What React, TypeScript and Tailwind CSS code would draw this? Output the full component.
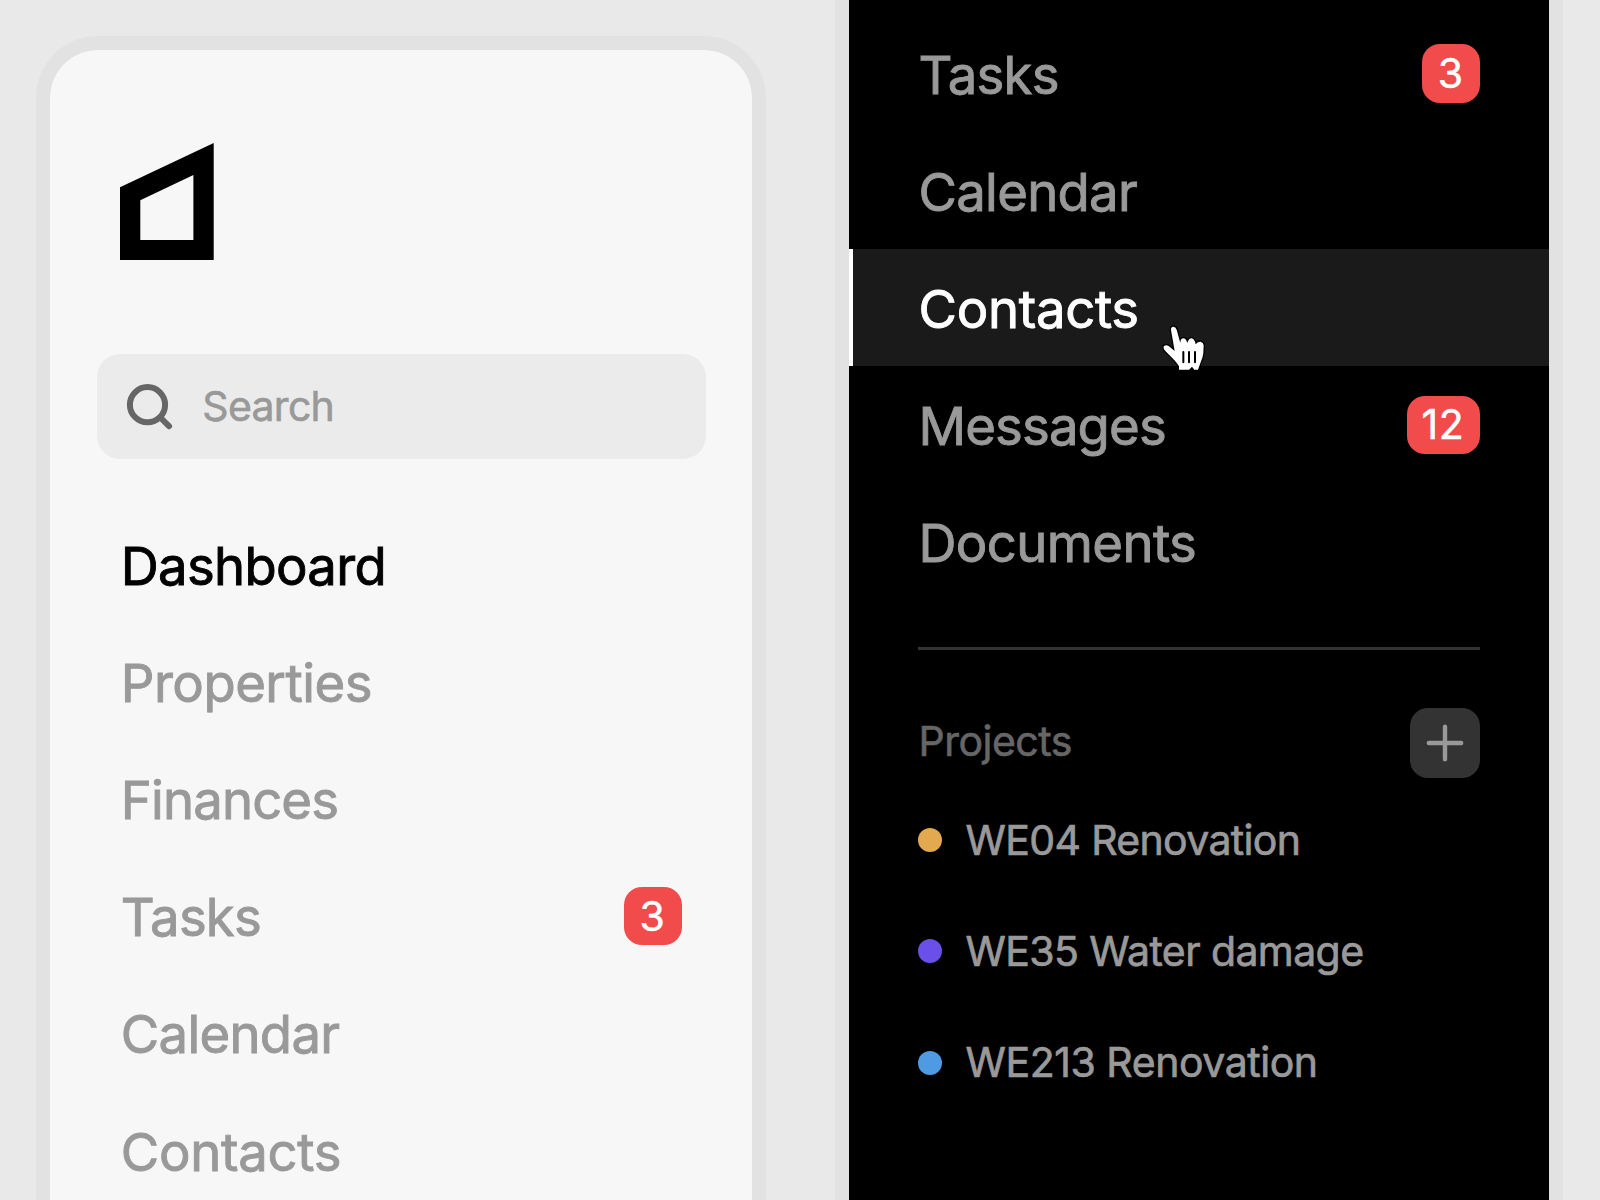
import type { ReactNode } from "react";

function Badge({ children }: { children: ReactNode }) {
  return (
    <span className="flex h-[58.5px] min-w-[58.5px] items-center justify-center rounded-[18px] bg-[#f24b4b] pr-[16px] pl-[15px] text-[41px] leading-none tracking-[0.6px] text-white [-webkit-text-stroke:0.5px_currentColor]">
      {children}
    </span>
  );
}

type Item = { label: string; badge?: string; tracking: string };

const leftItems: Item[] = [
  { label: "Dashboard", tracking: "tracking-[-0.7px]" },
  { label: "Properties", tracking: "tracking-[-0.5px]" },
  { label: "Finances", tracking: "tracking-[-0.85px]" },
  { label: "Tasks", badge: "3", tracking: "tracking-[-0.8px]" },
  { label: "Calendar", tracking: "tracking-[-0.7px]" },
  { label: "Contacts", tracking: "tracking-[-0.3px]" },
];

const rightItems: Item[] = [
  { label: "Tasks", badge: "3", tracking: "tracking-[-0.8px]" },
  { label: "Calendar", tracking: "tracking-[-0.7px]" },
  { label: "Contacts", tracking: "tracking-[-0.3px]" },
  { label: "Messages", badge: "12", tracking: "tracking-[-0.85px]" },
  { label: "Documents", tracking: "tracking-[-0.6px]" },
];

const projects = [
  { label: "WE04 Renovation", dot: "bg-[#e2a94f]", tracking: "tracking-[-0.65px]" },
  { label: "WE35 Water damage", dot: "bg-[#6a50e8]", tracking: "tracking-[-0.6px]" },
  { label: "WE213 Renovation", dot: "bg-[#4f9be3]", tracking: "tracking-[-0.45px]" },
];

function Logo() {
  return (
    <svg className="h-[117px] w-[94px]" viewBox="0 0 94 117">
      <path fillRule="evenodd" d="M0 44.3 93.7 0V117H0ZM20.3 57.2V97H73.4V32Z" fill="#000" />
    </svg>
  );
}

function HandCursor() {
  return (
    <svg className="absolute top-[61px] left-[287.5px] h-[70px] w-[90px]" viewBox="0 0 270 210">
      <path
        d="M93 60Q92 51 100 50Q107 50 110 59L121 99Q121 86 129 85Q138 84 142 99Q146 85 154 85Q164 86 167 103Q172 94 182 95Q190 97 191 106L190 130Q188 145 182 157L174 179H163L156 170L147 179H117V169Q110 158 102 149L76 123Q68 114 72 108Q78 103 86 108L104 123Z"
        fill="#fff"
        stroke="#000"
        strokeWidth="8"
        strokeLinejoin="round"
        paintOrder="stroke"
      />
      <path d="M130 126V157M147 126V157M165 126V157" stroke="#000" strokeWidth="6" strokeLinecap="round" />
    </svg>
  );
}

export default function App() {
  return (
    <div className="flex h-[1200px] w-[1600px] items-start overflow-hidden bg-[#e9e9e9] font-['Inter',sans-serif] text-[52.65px] font-normal text-[#999999]">
      <aside className="mt-[36.3px] ml-[36.3px] h-[1300px] w-[730px] shrink-0 rounded-[62px] border-[14px] border-[#e2e2e2] bg-[#f7f7f7] bg-clip-padding pt-[93px]">
        <div className="pl-[70px]">
          <Logo />
        </div>
        <div className="mt-[94px] ml-[47px] flex h-[105px] w-[609px] items-center rounded-[23px] bg-[#ebebeb] pl-[29px] text-[41px]">
          <svg className="h-[47px] w-[47px]" viewBox="0 0 47 47" fill="none" stroke="#666666" strokeWidth="6" strokeLinecap="round">
            <circle cx="21.5" cy="21.7" r="17.6" />
            <path d="M34.3 34.5 43 43.2" />
          </svg>
          <span className="pl-[29px] tracking-[-0.7px] [-webkit-text-stroke:0.6px_currentColor]">Search</span>
        </div>
        <nav className="mt-[47px]">
          {leftItems.map((item, i) => (
            <a key={item.label} className={`flex h-[117.1px] items-center justify-between pr-[70px] pl-[70.5px] ${i === 0 ? "text-black" : ""}`}>
              <span className={`pt-[3.4px] [-webkit-text-stroke:0.9px_currentColor] ${item.tracking}`}>{item.label}</span>
              {item.badge && <Badge>{item.badge}</Badge>}
            </a>
          ))}
        </nav>
      </aside>

      <aside className="ml-[68.7px] h-[1200px] w-[728.5px] shrink-0 border-x-[14px] border-[#e2e2e2] bg-black bg-clip-padding pt-[15px]">
        <nav>
          {rightItems.map((item) => {
            const active = item.label === "Contacts";
            return (
              <a
                key={item.label}
                className={`relative flex h-[117.1px] items-center justify-between border-l-4 pr-[69px] pl-[65.5px] ${active ? "border-white bg-[#1a1a1a] text-white" : "border-transparent"}`}
              >
                <span className={`pt-[4px] [-webkit-text-stroke:0.9px_currentColor] ${item.tracking}`}>{item.label}</span>
                {item.badge && <Badge>{item.badge}</Badge>}
                {active && <HandCursor />}
              </a>
            );
          })}
        </nav>
        <div className="mr-[69px] ml-[69.5px] pt-[46.3px]">
          <hr className="border-t-[3px] border-[#333333]" />
          <div className="mt-[58.5px] flex items-center justify-between">
            <h2 className="pb-[4px] text-[41px] leading-[60px] tracking-[-0.5px] text-[#666666] [-webkit-text-stroke:0.6px_currentColor]">Projects</h2>
            <button className="flex size-[70px] items-center justify-center rounded-[18px] bg-[#333333]">
              <svg className="size-[40px]" viewBox="0 0 40 40" stroke="#999999" strokeWidth="4.4" strokeLinecap="round">
                <path d="M20 3.8V36.2M3.8 20H36.2" />
              </svg>
            </button>
          </div>
          <ul className="mt-[6.3px]">
            {projects.map((p) => (
              <li key={p.label} className="flex h-[111.2px] items-center text-[41px]">
                <span className={`size-[24px] rounded-full ${p.dot}`} />
                <span className={`pt-px pl-[23px] [-webkit-text-stroke:0.7px_currentColor] ${p.tracking}`}>{p.label}</span>
              </li>
            ))}
          </ul>
        </div>
      </aside>
    </div>
  );
}
